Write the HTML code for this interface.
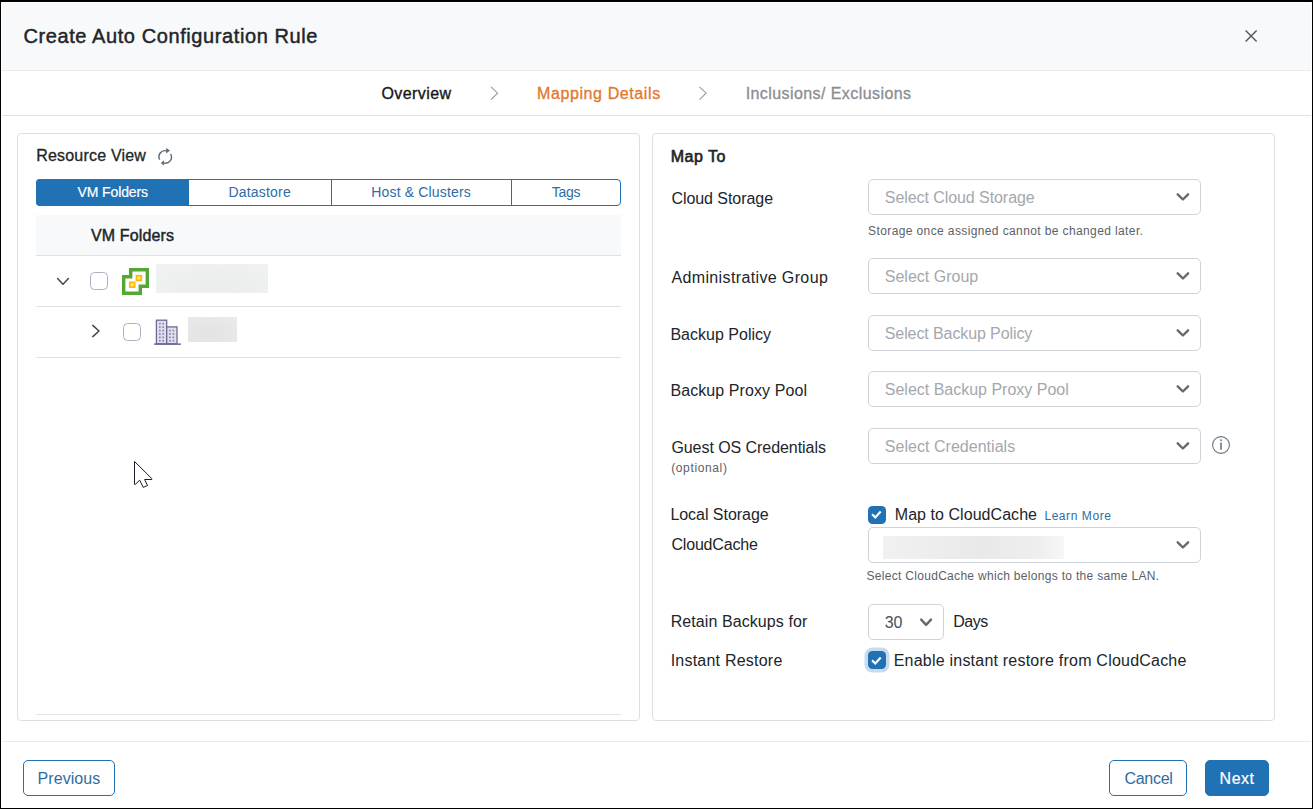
<!DOCTYPE html>
<html lang="en">
<head>
<meta charset="utf-8">
<title>Create Auto Configuration Rule</title>
<style>
html,body{margin:0;padding:0;}
body{width:1313px;height:809px;background:#000;overflow:hidden;position:relative;font-family:"Liberation Sans",sans-serif;}
.abs,.t,.sel,.cb,.btn,.line{position:absolute;box-sizing:border-box;}
.t{white-space:pre;line-height:20px;height:20px;}
#modal{left:1px;top:2px;width:1311px;height:806px;background:#fff;}
#header{left:2px;top:3px;width:1309px;height:67px;background:#f8f9fb;}
.line{height:1px;background:#dee2e6;}
.panel{border:1px solid #dfdfdf;border-radius:4px;background:#fff;}
.sel{height:36px;border:1px solid #ced4da;border-radius:5px;background:#fff;}
.cb{width:18px;height:18px;border-radius:4.5px;}
.cb.off{border:1px solid #aab2c0;background:#fff;}
.cb.on{background:#2171b5;}
.btn{height:36px;border:1px solid #2171b5;border-radius:5px;background:#fff;}
.btn.primary{background:#2171b5;}
svg{position:absolute;overflow:visible;}
</style>
</head>
<body>
<div class="abs" id="modal"></div>
<div class="abs" id="header"></div>
<div class="line" style="left:2px;top:70px;width:1309px;background:#e9ecef"></div>
<div class="line" style="left:2px;top:115px;width:1309px;background:#dee2e6"></div>
<div class="line" style="left:2px;top:741px;width:1309px;background:#e9ecef"></div>

<!-- panels -->
<div class="abs panel" style="left:17px;top:133px;width:623px;height:588px"></div>
<div class="abs panel" style="left:652px;top:133px;width:623px;height:588px"></div>

<!-- tabs -->
<div class="abs" style="left:36px;top:179px;width:585px;height:27px;border:1px solid #2171b5;border-radius:4px;background:#fff"></div>
<div class="abs" style="left:36px;top:179px;width:153px;height:27px;background:#2171b5;border-radius:4px 0 0 4px"></div>
<div class="abs" style="left:331px;top:179px;width:1px;height:27px;background:#2171b5"></div>
<div class="abs" style="left:511px;top:179px;width:1px;height:27px;background:#2171b5"></div>

<!-- table -->
<div class="abs" style="left:36px;top:215px;width:585px;height:40px;background:#f8f9fa"></div>
<div class="line" style="left:36px;top:255px;width:585px"></div>
<div class="line" style="left:36px;top:306px;width:585px"></div>
<div class="line" style="left:36px;top:357px;width:585px"></div>
<div class="line" style="left:36px;top:714px;width:585px;background:#e3e3e3"></div>

<!-- tree row 1 -->
<svg style="left:0;top:0" width="1313" height="809" viewBox="0 0 1313 809">
  <!-- chevrons in tree -->
  <path d="M57.6 278.6 L63 284.2 L68.4 278.6" fill="none" stroke="#444" stroke-width="1.5" stroke-linecap="round" stroke-linejoin="round"/>
  <path d="M92.8 325.4 L99 331 L92.8 336.6" fill="none" stroke="#444" stroke-width="1.5" stroke-linecap="round" stroke-linejoin="round"/>
  <!-- stepper chevrons -->
  <path d="M491 86.8 L497.6 93.2 L491 99.6" fill="none" stroke="#9a9a9a" stroke-width="1.1"/>
  <path d="M699.5 86.8 L706.1 93.2 L699.5 99.6" fill="none" stroke="#9a9a9a" stroke-width="1.1"/>
  <!-- close X -->
  <path d="M1245.6 30.4 L1256.6 41.4 M1256.6 30.4 L1245.6 41.4" fill="none" stroke="#555" stroke-width="1.4"/>
  <!-- refresh icon -->
  <g fill="none" stroke="#5c6770" stroke-width="1.4">
    <path d="M159.7 159.6 A6 6 0 0 1 166.5 150.9"/>
    <path d="M170.6 154.1 A6 6 0 0 1 163.6 162.9"/>
  </g>
  <path d="M166.2 147.9 L169.9 150.6 L166.2 153.6 Z" fill="#5c6770"/>
  <path d="M163.9 160.2 L160.9 162.9 L163.9 165.8 Z" fill="#5c6770"/>
  <!-- vcenter icon -->
  <path d="M130.7 269.7 H147.3 V286.3 H140.3 V293.3 H123.7 V276.7 H130.7 Z" fill="#fff" stroke="#54a735" stroke-width="3.4" stroke-linejoin="miter"/>
  <rect x="135.6" y="274.8" width="6.6" height="6.5" fill="#fdb913"/>
  <rect x="137.4" y="276.6" width="3" height="2.9" fill="#fff35a"/>
  <rect x="128.9" y="281.5" width="6.6" height="6.5" fill="#fdb913"/>
  <rect x="130.7" y="283.3" width="3" height="2.9" fill="#fff35a"/>
  <!-- building icon -->
  <rect x="156.4" y="320.2" width="10.3" height="23.6" fill="#dedeee" stroke="#6b6a92" stroke-width="1.3"/>
  <rect x="166.7" y="326.9" width="10.3" height="16.9" fill="#dedeee" stroke="#6b6a92" stroke-width="1.3"/>
  <rect x="154.1" y="343.4" width="26.8" height="1.5" fill="#6b6a92"/>
  <g fill="#8a89ab">
    <rect x="159.0" y="322.8" width="1.7" height="1.7"/><rect x="162.3" y="322.8" width="1.7" height="1.7"/>
    <rect x="159.0" y="326.3" width="1.7" height="1.7"/><rect x="162.3" y="326.3" width="1.7" height="1.7"/>
    <rect x="159.0" y="329.7" width="1.7" height="1.7"/><rect x="162.3" y="329.7" width="1.7" height="1.7"/>
    <rect x="159.0" y="333.1" width="1.7" height="1.7"/><rect x="162.3" y="333.1" width="1.7" height="1.7"/>
    <rect x="159.0" y="336.5" width="1.7" height="1.7"/><rect x="162.3" y="336.5" width="1.7" height="1.7"/>
    <rect x="159.0" y="339.9" width="1.7" height="1.7"/><rect x="162.3" y="339.9" width="1.7" height="1.7"/>
    <rect x="169.1" y="329.7" width="1.7" height="1.7"/><rect x="172.5" y="329.7" width="1.7" height="1.7"/>
    <rect x="169.1" y="333.1" width="1.7" height="1.7"/><rect x="172.5" y="333.1" width="1.7" height="1.7"/>
    <rect x="169.1" y="336.5" width="1.7" height="1.7"/><rect x="172.5" y="336.5" width="1.7" height="1.7"/>
    <rect x="169.1" y="339.9" width="1.7" height="1.7"/><rect x="172.5" y="339.9" width="1.7" height="1.7"/>
  </g>
  <!-- mouse cursor -->
  <path d="M134.5 461.5 L134.5 484.4 L135.3 484.4 L139.7 480.2 L143.2 487.4 L147.5 485.5 L144.6 479.5 L151.8 479.5 L151.8 478.6 Z" fill="#fff" stroke="#1b1b2b" stroke-width="1" stroke-linejoin="round"/>
</svg>

<!-- tree checkboxes + redaction blocks -->
<div class="cb off" style="left:90px;top:272px"></div>
<div class="cb off" style="left:123px;top:323px"></div>
<div class="abs" style="left:156px;top:264px;width:112px;height:29px;background:radial-gradient(ellipse at 55% 75%,#ebecec 0%,#eeefef 55%,#f1f2f2 100%)"></div>
<div class="abs" style="left:188px;top:317px;width:49px;height:25px;background:radial-gradient(ellipse at 40% 70%,#e3e3e3 0%,#e7e7e8 60%,#ebebed 100%)"></div>

<!-- selects -->
<div class="sel" style="left:868px;top:179px;width:333px"></div>
<div class="sel" style="left:868px;top:258px;width:333px"></div>
<div class="sel" style="left:868px;top:315px;width:333px"></div>
<div class="sel" style="left:868px;top:371px;width:333px"></div>
<div class="sel" style="left:868px;top:428px;width:333px"></div>
<div class="sel" style="left:868px;top:527px;width:333px"></div>
<div class="sel" style="left:868px;top:604px;width:76px"></div>
<div class="abs" style="left:883px;top:536px;width:181px;height:23px;background:linear-gradient(90deg,#f1f1f1 0%,#e9e9e9 55%,#eeeeee 85%,#f6f6f6 100%)"></div>

<svg style="left:0;top:0" width="1313" height="809" viewBox="0 0 1313 809">
  <g fill="none" stroke="#696969" stroke-width="2.4" stroke-linecap="round" stroke-linejoin="round">
    <path d="M1177.7 194.3 L1182.9 199.5 L1188.1 194.3"/>
    <path d="M1177.7 273.3 L1182.9 278.5 L1188.1 273.3"/>
    <path d="M1177.7 330.3 L1182.9 335.5 L1188.1 330.3"/>
    <path d="M1177.7 386.3 L1182.9 391.5 L1188.1 386.3"/>
    <path d="M1177.7 443.3 L1182.9 448.5 L1188.1 443.3"/>
    <path d="M1177.7 542.3 L1182.9 547.5 L1188.1 542.3"/>
    <path d="M921.2 619.6 L926.1 624.9 L931 619.6"/>
  </g>
  <!-- info icon -->
  <circle cx="1221" cy="445" r="8.4" fill="#fff" stroke="#6c757d" stroke-width="1.1"/>
  <rect x="1220.2" y="442.6" width="1.6" height="7.2" fill="#6c757d"/>
  <rect x="1220.2" y="439.4" width="1.6" height="1.6" fill="#6c757d"/>
</svg>

<!-- blue checkboxes -->
<div class="cb on" style="left:868px;top:506px"></div>
<div class="cb on" style="left:868px;top:651px;box-shadow:0 0 0 3.5px #c9dcee"></div>
<svg style="left:0;top:0" width="1313" height="809" viewBox="0 0 1313 809">
  <g fill="none" stroke="#fff" stroke-width="2.2" stroke-linecap="butt" stroke-linejoin="miter">
    <path d="M872.1 514.3 L875.3 517.4 L880.7 511.6"/>
    <path d="M872.1 660.4 L875.3 663.5 L880.7 657.6"/>
  </g>
</svg>

<!-- buttons -->
<div class="btn" style="left:23px;top:760px;width:92px"></div>
<div class="btn" style="left:1109px;top:760px;width:78px"></div>
<div class="btn primary" style="left:1205px;top:760px;width:64px"></div>

<span class="t" style="left:23.43px;top:26px;font-size:20px;font-weight:400;color:#212529;letter-spacing:0.591px;-webkit-text-stroke:0.45px #212529">Create Auto Configuration Rule</span>
<span class="t" style="left:381.38px;top:84px;font-size:16px;font-weight:400;color:#15181b;letter-spacing:0.446px;-webkit-text-stroke:0.35px #15181b">Overview</span>
<span class="t" style="left:537.05px;top:84px;font-size:16px;font-weight:400;color:#e2782a;letter-spacing:0.598px;-webkit-text-stroke:0.3px #e2782a">Mapping Details</span>
<span class="t" style="left:745.65px;top:84px;font-size:16px;font-weight:400;color:#8a8d91;letter-spacing:0.423px;-webkit-text-stroke:0.3px #8a8d91">Inclusions/ Exclusions</span>
<span class="t" style="left:36.15px;top:146px;font-size:16px;font-weight:400;color:#212529;letter-spacing:0.204px;-webkit-text-stroke:0.3px #212529">Resource View</span>
<span class="t" style="left:77.50px;top:182px;font-size:14px;font-weight:400;color:#ffffff;letter-spacing:-0.108px;-webkit-text-stroke:0.2px #ffffff">VM Folders</span>
<span class="t" style="left:228.40px;top:182px;font-size:14px;font-weight:400;color:#2e6da4;letter-spacing:0.211px">Datastore</span>
<span class="t" style="left:371.30px;top:182px;font-size:14px;font-weight:400;color:#2e6da4;letter-spacing:0.161px">Host &amp; Clusters</span>
<span class="t" style="left:551.70px;top:182px;font-size:14px;font-weight:400;color:#2e6da4;letter-spacing:-0.224px">Tags</span>
<span class="t" style="left:90.92px;top:226px;font-size:16px;font-weight:400;color:#212529;letter-spacing:0.150px;-webkit-text-stroke:0.45px #212529">VM Folders</span>
<span class="t" style="left:670.73px;top:147px;font-size:16px;font-weight:400;color:#212529;letter-spacing:0.516px;-webkit-text-stroke:0.65px #212529">Map To</span>
<span class="t" style="left:671.40px;top:189px;font-size:16px;font-weight:400;color:#212529;letter-spacing:-0.049px">Cloud Storage</span>
<span class="t" style="left:884.80px;top:188px;font-size:16px;font-weight:400;color:#a3a8ae;letter-spacing:-0.069px">Select Cloud Storage</span>
<span class="t" style="left:868.10px;top:221px;font-size:12px;font-weight:400;color:#5b6168;letter-spacing:0.385px">Storage once assigned cannot be changed later.</span>
<span class="t" style="left:671.40px;top:268px;font-size:16px;font-weight:400;color:#212529;letter-spacing:0.369px">Administrative Group</span>
<span class="t" style="left:884.80px;top:267px;font-size:16px;font-weight:400;color:#a3a8ae;letter-spacing:0.001px">Select Group</span>
<span class="t" style="left:670.40px;top:325px;font-size:16px;font-weight:400;color:#212529;letter-spacing:0.017px">Backup Policy</span>
<span class="t" style="left:884.80px;top:324px;font-size:16px;font-weight:400;color:#a3a8ae;letter-spacing:-0.100px">Select Backup Policy</span>
<span class="t" style="left:670.40px;top:381px;font-size:16px;font-weight:400;color:#212529;letter-spacing:0.092px">Backup Proxy Pool</span>
<span class="t" style="left:884.80px;top:380px;font-size:16px;font-weight:400;color:#a3a8ae;letter-spacing:-0.006px">Select Backup Proxy Pool</span>
<span class="t" style="left:671.40px;top:438px;font-size:16px;font-weight:400;color:#212529;letter-spacing:-0.059px">Guest OS Credentials</span>
<span class="t" style="left:671.20px;top:457.5px;font-size:12px;font-weight:400;color:#5b6168;letter-spacing:0.630px">(optional)</span>
<span class="t" style="left:884.80px;top:437px;font-size:16px;font-weight:400;color:#a3a8ae;letter-spacing:0.033px">Select Credentials</span>
<span class="t" style="left:670.40px;top:505px;font-size:16px;font-weight:400;color:#212529;letter-spacing:-0.036px">Local Storage</span>
<span class="t" style="left:894.80px;top:505px;font-size:16px;font-weight:400;color:#212529;letter-spacing:0.049px">Map to CloudCache</span>
<span class="t" style="left:1044.40px;top:506px;font-size:12px;font-weight:400;color:#2e6da4;letter-spacing:0.568px">Learn More</span>
<span class="t" style="left:671.40px;top:535px;font-size:16px;font-weight:400;color:#212529;letter-spacing:-0.173px">CloudCache</span>
<span class="t" style="left:866.40px;top:566px;font-size:12px;font-weight:400;color:#5b6168;letter-spacing:0.308px">Select CloudCache which belongs to the same LAN.</span>
<span class="t" style="left:670.70px;top:612px;font-size:16px;font-weight:400;color:#212529;letter-spacing:0.079px">Retain Backups for</span>
<span class="t" style="left:884.80px;top:613px;font-size:16px;font-weight:400;color:#495057;letter-spacing:-0.298px">30</span>
<span class="t" style="left:953.30px;top:612px;font-size:16px;font-weight:400;color:#212529;letter-spacing:-0.518px">Days</span>
<span class="t" style="left:670.70px;top:651px;font-size:16px;font-weight:400;color:#212529;letter-spacing:0.221px">Instant Restore</span>
<span class="t" style="left:893.70px;top:651px;font-size:16px;font-weight:400;color:#212529;letter-spacing:0.219px">Enable instant restore from CloudCache</span>
<span class="t" style="left:37.60px;top:769px;font-size:16px;font-weight:400;color:#2e6da4;letter-spacing:0.064px">Previous</span>
<span class="t" style="left:1124.50px;top:769px;font-size:16px;font-weight:400;color:#2e6da4;letter-spacing:-0.290px">Cancel</span>
<span class="t" style="left:1219.60px;top:769px;font-size:16px;font-weight:400;color:#ffffff;letter-spacing:0.516px;-webkit-text-stroke:0.2px #ffffff">Next</span>
</body>
</html>
